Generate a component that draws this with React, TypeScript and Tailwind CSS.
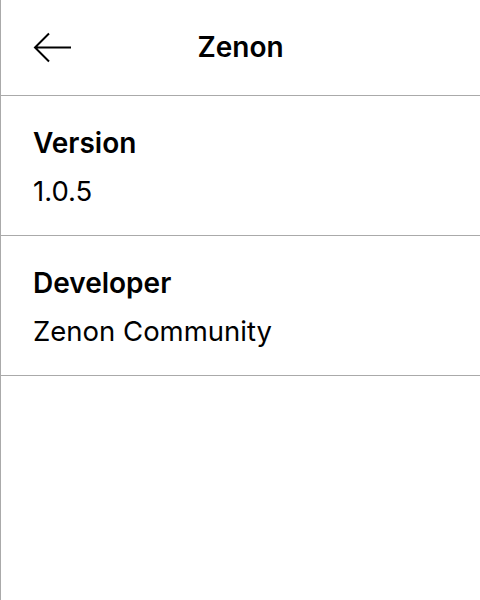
export default function App() {
  const rows = [
    { label: "Version", value: "1.0.5" },
    { label: "Developer", value: "Zenon Community" },
  ];

  return (
    <div
      className="min-h-screen bg-white border-l border-[#aaaaaa] text-black"
      style={{ fontFamily: "Inter, 'Noto Sans', sans-serif" }}
    >
      {/* Header */}
      <header className="h-[96px] border-b border-[#aaaaaa] flex items-center">
        <div className="w-[104px] pl-[32px] flex items-center">
          <svg width="40" height="32" viewBox="0 0 40 32" fill="none">
            <path
              d="M2 15.5H38M16 1.5L2 15.5L16 29.5"
              stroke="#000000"
              strokeWidth="2"
              strokeLinecap="butt"
              strokeLinejoin="miter"
            />
          </svg>
        </div>
        <h1 className="flex-1 text-center text-[28px] font-semibold leading-8 -mt-[1px]">Zenon</h1>
        <div className="w-[104px]" />
      </header>

      {/* Info rows */}
      {rows.map((row) => (
        <section
          key={row.label}
          className="h-[140px] border-b border-[#aaaaaa] flex flex-col justify-center gap-[16px] pl-[32px] pt-[2px]"
        >
          <p className="text-[28px] font-semibold leading-8">{row.label}</p>
          <p className="text-[27.5px] leading-8">{row.value}</p>
        </section>
      ))}
    </div>
  );
}
